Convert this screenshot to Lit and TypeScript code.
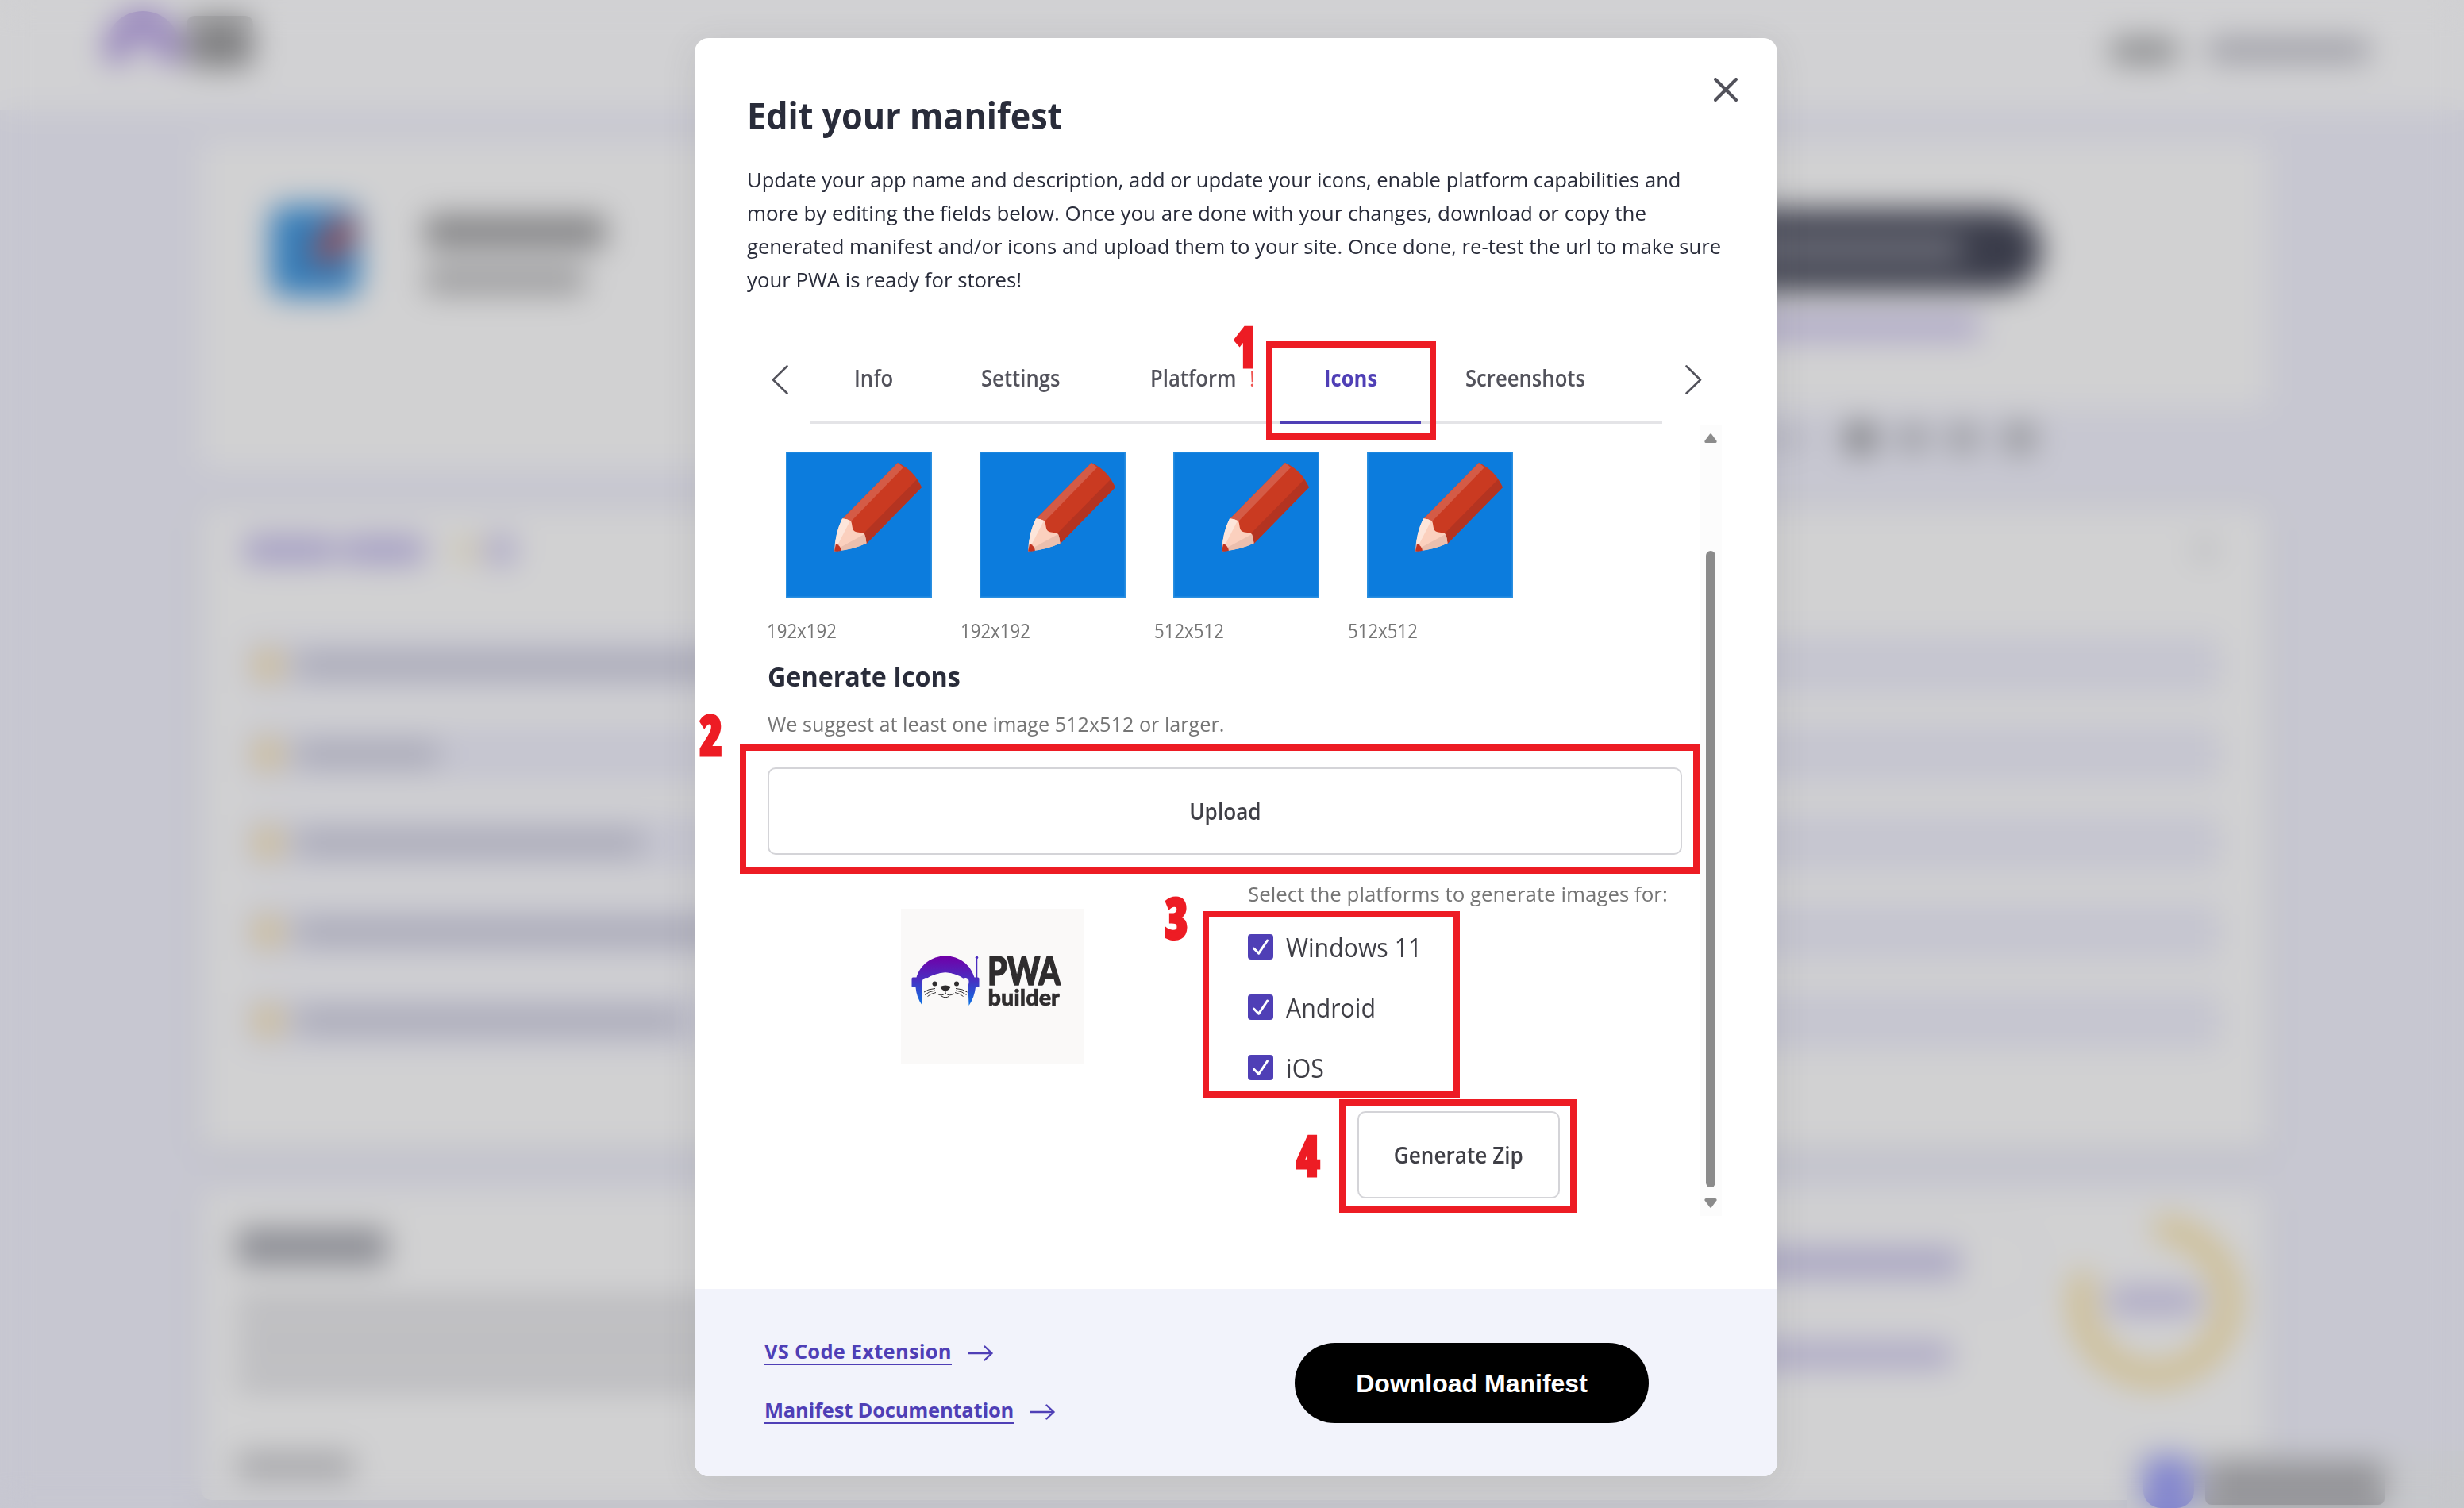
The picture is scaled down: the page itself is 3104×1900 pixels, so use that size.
import { LitElement, html, css, svg } from "lit";
import { customElement, property } from "lit/decorators.js";
import { classMap } from "lit/directives/class-map.js";
import { styleMap } from "lit/directives/style-map.js";

/** Page behind the dialog, softened by the dialog overlay. */
@customElement("report-backdrop")
class ReportBackdrop extends LitElement {
  static styles = css`
    :host { display: block; height: 1900px; overflow: hidden; background: #c7c7d1; }
    * { box-sizing: border-box; }
    .bar { border-radius: 8px; flex: none; }
    .top { height: 139px; background: #d1d1d3; display: flex; justify-content: space-between; padding: 0 119px 0 133px; }
    .brand { display: flex; padding-top: 14px; }
    .arch { width: 94px; height: 64px; border-radius: 47px 47px 0 0; border: 30px solid #8d78b8; border-bottom: 0; }
    .word { width: 84px; height: 66px; margin: 6px 0 0 8px; background: #828284; border-radius: 10px; }
    .nav { display: flex; gap: 38px; padding-top: 48px; }
    .nav .bar { height: 29px; }
    .cards { width: 2604px; margin: 38px 0 0 253px; display: flex; flex-direction: column; gap: 50px; }
    .card { background: #d1d1d2; border-radius: 14px; box-shadow: 0 6px 26px rgba(90, 95, 105, 0.16); }
    .hero { display: grid; grid-template-columns: 1300px 1fr; height: 413px; }
    .hero .card { box-shadow: none; }
    .site { border-radius: 14px 0 0 14px; display: flex; padding: 82px 0 0 88px; gap: 82px; }
    .app { width: 112px; height: 114px; border-radius: 16px; background: #347cb8; flex: none; padding: 12px 4px; display: flex; justify-content: flex-end; align-items: flex-start; }
    .app i { width: 30px; height: 64px; background: #a04a4c; transform: rotate(40deg); border-radius: 8px; margin-right: 12px; }
    .names { padding-top: 12px; display: flex; flex-direction: column; gap: 22px; }
    .action { display: grid; grid-template-rows: 337px 1fr; }
    .act { border-radius: 0 14px 14px 0; padding: 87px 0 0 500px; }
    .pill { width: 519px; height: 102px; border-radius: 51px; background: #3a3c4a; padding: 37px 100px 0 0; display: flex; justify-content: flex-end; }
    .share { display: flex; align-items: center; justify-content: flex-end; gap: 30px; padding-right: 293px; }
    .items { height: 808px; padding: 28px 0 0 54px; }
    .itemhead { display: flex; align-items: center; height: 50px; }
    .grow { flex: 1; }
    .row { height: 72px; width: 2490px; margin-bottom: 40px; background: #c5c5d0; border-radius: 10px; display: flex; align-items: center; gap: 18px; padding-left: 14px; }
    .rows { padding-top: 84px; }
    .dot { width: 34px; height: 34px; border-radius: 50%; background: #d4bb7a; }
    .manifest { height: 392px; padding: 50px 31px 0 45px; display: flex; justify-content: space-between; }
    .copy { display: flex; flex-direction: column; gap: 14px; }
    .side { display: flex; gap: 32px; }
    .links { display: flex; flex-direction: column; align-items: flex-end; gap: 46px; margin-top: -12px; }
    .outline { height: 110px; width: 600px; border: 3px solid #c3c3cd; border-radius: 55px; display: flex; align-items: center; justify-content: flex-end; padding-right: 99px; flex: none; }
    .ring { width: 222px; height: 222px; margin-top: -19px; }
    .badge { position: absolute; right: 0; top: 1828px; width: 424px; height: 72px; background: #c6c7cb; display: flex; gap: 14px; padding: 6px 0 0 20px; }
    .chat { width: 64px; height: 66px; border-radius: 22px; background: #8184ce; }
    .veil { position: absolute; inset: 0; backdrop-filter: blur(19px); }
  `;
  bar(w: number, h: number, c: string, extra = {}) {
    return html`<div class="bar" style=${styleMap({ width: w + "px", height: h + "px", background: c, ...extra })}></div>`;
  }
  render() {
    return html`
      <div class="top">
        <div class="brand"><div class="arch"></div><div class="word"></div></div>
        <div class="nav">${this.bar(84, 32, "#8b8c8e")}${this.bar(204, 30, "#9d9da5")}</div>
      </div>
      <div class="cards">
        <div class="hero">
          <div class="card site">
            <div class="app"><i></i></div>
            <div class="names">${this.bar(228, 42, "#848486")}${this.bar(202, 36, "#9c9c9e")}</div>
          </div>
          <div class="action">
            <div class="card act">
              <div class="pill">${this.bar(380, 26, "#7c7d87")}</div>
              ${this.bar(442, 30, "#aba4c6", { marginTop: "31px" })}
            </div>
            <div class="share">
              ${this.bar(180, 20, "#b0b0bb")}${this.bar(40, 40, "#747577", { borderRadius: "50%", marginLeft: "16px" })}
              ${this.bar(32, 30, "#8c8d91")}${this.bar(34, 34, "#929397")}${this.bar(40, 36, "#929397", { marginLeft: "4px" })}
            </div>
          </div>
        </div>
        <div class="card items">
          <div class="itemhead">
            ${this.bar(116, 34, "#a29bc3")}${this.bar(104, 34, "#a29bc3", { marginLeft: "8px" })}
            ${this.bar(28, 26, "#cabf9f", { marginLeft: "38px" })}${this.bar(36, 36, "#a9a4c6", { marginLeft: "12px" })}
            <div class="grow"></div>${this.bar(26, 22, "#b3b4b9", { marginRight: "66px" })}
          </div>
          <div class="rows">
            ${[560, 180, 438, 540, 486].map((w) => html`<div class="row"><div class="dot"></div>${this.bar(w, 26, "#a4a4b2")}</div>`)}
          </div>
        </div>
        <div class="card manifest">
          <div class="copy">
            ${this.bar(190, 46, "#8b8c93")}
            ${this.bar(740, 26, "#b4b4b8", { marginTop: "28px" })}${this.bar(740, 26, "#b3b3b7", { marginTop: "4px" })}${this.bar(740, 26, "#b4b4b8", { marginTop: "4px" })}
            ${this.bar(148, 30, "#a1a1a5", { marginTop: "68px" })}
          </div>
          <div class="side">
            <div class="links">
              <div class="outline">${this.bar(340, 36, "#a7a3c2")}</div>
              ${this.bar(340, 30, "#a9a4c4", { marginRight: "113px" })}
            </div>
            <svg class="ring" viewBox="0 0 222 222">
              <path d="M111 18A93 93 0 1 1 24 76" fill="none" stroke="#cebb89" stroke-width="28" />
              <rect x="52" y="94" width="116" height="32" rx="10" fill="#aaa5c4" />
            </svg>
          </div>
        </div>
      </div>
      <div class="badge"><div class="chat"></div>${this.bar(226, 56, "#949498", { marginTop: "6px" })}</div>
      <div class="veil"></div>
    `;
  }
}

/** Red pencil on a blue tile. */
const pencil = svg`
  <rect width="184" height="184" fill="#0c7cdd"/>
  <rect x=".75" y=".75" width="182.500" height="182.500" fill="none" stroke="#2a8fe0" stroke-width="1.500"/>
  <path d="M141 14Q162 24 171 45L101.500 116L80 108L71 85Z" fill="#ca3a21"/>
  <path d="M141 14L148 20L82 88L71 85Z" fill="#d45b46"/>
  <path d="M165 35L171 45L101.500 116L98 103Z" fill="#b43421"/>
  <path d="M71 84.500Q76 84 82 87.500C84 92 83 97 86 100C91 103 96 101 99 104Q101 109 101.500 115.500Q84 124 61 125.500Q62 103 71 84.500Z" fill="#fbd0be"/>
  <path d="M71 84.500Q76 84 81 87L64 120L62 121Q62 102 71 84.500Z" fill="#fde5da"/>
  <path d="M99 104Q101 109 101.500 115.500Q86 123 66 125.200L68 121Z" fill="#ebbfae"/>
  <path d="M63 116Q68.500 118 70 124.700Q66 126 61 125.500Z" fill="#c23522"/>`;

const builderLogo = svg`
  <defs><linearGradient id="helmet" x1="0" y1="60" x2="0" y2="122" gradientUnits="userSpaceOnUse">
    <stop offset="0" stop-color="#7000a8"/><stop offset=".45" stop-color="#4b2cc0"/><stop offset="1" stop-color="#0a74e4"/>
  </linearGradient></defs>
  <path d="M19.500 86.500C24 71 38 59.500 56 59.500S88 71 92.500 86.500H97Q98.500 86.500 98.500 88V97.500Q98.500 99 97 99H94Q92.500 112 85.500 122L84.500 96L79 88Q68 80.500 56 80.500T32 88L27 96V122Q19.500 112 18.500 99H15Q13.500 99 13.500 97.500V88Q13.500 86.500 15 86.500Z" fill="url(#helmet)"/>
  <path d="M95.500 87V63" stroke="#4b2cc0" stroke-width="1.500"/><circle cx="95.500" cy="61.500" r="1.800" fill="#4b2cc0"/>
  <path d="M27 122V96Q25.500 88 31 87Q34 86.500 36 89Q45 80.500 56 80.500T77 89Q79 86.500 82 87Q87 88 85 96V122Z" fill="#faf9f8"/>
  <circle cx="42.500" cy="94.500" r="3" fill="#2f2d2e"/><circle cx="70" cy="94.500" r="3" fill="#2f2d2e"/>
  <path d="M49.500 98Q56 95 62.500 98Q62 101 57.500 103.500Q56 104.500 54.500 103.500Q50 101 49.500 98Z" fill="#2f2d2e"/>
  <path d="M56 103V107M56 106.500Q51 111 45.500 107M56 106.500Q61 111 66.500 107M51 110Q56 113.500 61 110M43 100.500Q34 101 29 105M43 103Q35 104 30 108.500M44 105.500Q37 107 33.500 110.500M69 100.500Q78 101 83.500 105M69 103Q77 104 82.500 108.500M68 105.500Q75 107 78.500 110.500" fill="none" stroke="#2f2d2e" stroke-width="1"/>
  <text x="109" y="96" class="pwa" textLength="92" lengthAdjust="spacingAndGlyphs">PWA</text>
  <text x="109.500" y="122" class="bld" textLength="90.500" lengthAdjust="spacingAndGlyphs">builder</text>`;

const checkmark = html`<svg class="box" viewBox="0 0 32 32"><rect width="32" height="32" rx="4" fill="#4f3fb6"/><path d="M7.500 18L13.700 24.200L24.500 8" fill="none" stroke="#fff" stroke-width="3" stroke-linecap="round" stroke-linejoin="round"/></svg>`;
const arrow = html`<svg class="arrow" viewBox="0 0 32 20"><path d="M1.200 10H30.500M21.500 1.500L30.500 10L21.500 18.500" fill="none" stroke="#4f3fb6" stroke-width="2.400" stroke-linecap="round" stroke-linejoin="round"/></svg>`;

@customElement("manifest-dialog")
class ManifestDialog extends LitElement {
  static styles = css`
    :host { display: flex; flex-direction: column; width: 1364px; height: 1812px; background: #fff; border-radius: 18px; overflow: hidden; font-family: "Open Sans", "Noto Sans", sans-serif; color: #292c3a; }
    * { box-sizing: border-box; }
    h1, h2, p { margin: 0; }
    .fit { display: inline-block; white-space: nowrap; transform-origin: 0 50%; transform: scaleX(var(--sx, 1)); }
    .head { display: grid; grid-template-columns: 1fr auto; padding: 67px 50px 0 66px; }
    .title { font-size: 46px; line-height: 60px; font-weight: 700; --sx: 0.938; }
    .close { width: 30px; height: 30px; margin-top: -17px; display: block; }
    .lead { padding: 30px 65px 0 66px; font-size: 25.500px; line-height: 42px; display: flex; flex-direction: column; align-items: flex-start; }
    .l1 { --sx: 1.003; } .l2 { --sx: 1.017; } .l3 { --sx: 1.006; } .l4 { --sx: 1.010; }
    .tabs { height: 161px; padding: 47px 94px 0 97px; display: grid; grid-template-columns: 48px 1074px 21px; column-gap: 0; justify-content: start; }
    .tabs .next { margin-left: 29px; }
    .chev { width: 21px; height: 37px; margin-top: 40px; }
    .list { display: grid; grid-template-columns: 160px 213px 219px 178px 1fr; border-bottom: 4px solid #e4e4e7; }
    .tab { display: flex; padding: 36px 0 0 55.500px; font-size: 28px; line-height: 40px; font-weight: 600; color: #52525b; margin-bottom: -4px; gap: 7px; --sx: 0.917; }
    .tab.on { color: #4f3fb6; font-weight: 700; border-bottom: 4px solid #4f3fb6; }
    .warn { color: #ef5350; font-weight: 400; --sx: 1; }
    .pane { height: 996px; margin: 2px 70px 0 91px; display: flex; justify-content: space-between; }
    .content { width: 1153px; }
    .icons { display: grid; grid-template-columns: repeat(4, 244.100px); padding-top: 33px; }
    .tile { display: block; width: 184px; height: 184px; margin: 0 0 23px 24px; }
    .size { font-size: 25.200px; line-height: 36px; height: 36px; color: #757575; --sx: 0.882; }
    .sub { font-size: 34px; line-height: 46px; margin-top: 17px; font-weight: 700; height: 46px; --sx: 0.949; padding-left: 1px; }
    .hint { font-size: 25.200px; line-height: 36px; height: 36px; margin-top: 19px; color: #757575; --sx: 1.001; padding-left: 1px; }
    .btn { display: flex; align-items: center; justify-content: center; height: 110px; border: 2px solid #d4d4d8; border-radius: 10px; background: #fff; font-size: 28px; line-height: 40px; font-weight: 600; color: #3f3f46; --sx: 0.934; }
    .btn .fit { transform-origin: 50% 50%; }
    .upload { margin: 37px 0 0 1px; }
    .gen { display: flex; justify-content: space-between; padding: 31px 17px 0 169px; }
    .preview { width: 230px; height: 196px; margin-top: 37px; background: #faf9f8; display: block; }
    .pwa { font: 900 50px Lato, sans-serif; fill: #2f2d2e; stroke: #2f2d2e; stroke-width: 1.500px; }
    .bld { font: 900 28.500px Lato, sans-serif; fill: #2f2d2e; stroke: #2f2d2e; stroke-width: 0.500px; }
    .platforms { width: 530px; display: flex; flex-direction: column; align-items: center; }
    .ask { width: 100%; font-size: 26px; line-height: 36px; color: #757575; margin-bottom: 33px; --sx: 0.996; }
    .check { width: 100%; height: 32px; display: flex; gap: 16px; font-size: 32px; line-height: 33px; color: #3f3f46; margin-bottom: 44px; --sx: 0.946; }
    .box { width: 32px; height: 32px; flex: none; }
    .zip { width: 255px; margin-top: -5px; }
    .scroll { width: 28px; background: #fcfcfc; display: flex; flex-direction: column; align-items: center; padding: 10px 0; }
    .tri { width: 16px; height: 12px; display: block; }
    .thumb { width: 12px; height: 802px; margin: 136px 0 14px; border-radius: 6px; background: #8b8b8b; }
    .foot { margin-top: auto; height: 236px; background: #f2f3fb; display: flex; justify-content: space-between; align-items: flex-start; padding: 59px 162px 0 88px; }
    .links { display: flex; flex-direction: column; gap: 37px; }
    .link { display: flex; align-items: center; gap: 20px; color: #4f3fb6; font-size: 25.500px; line-height: 31px; font-weight: 700; height: 37px; }
    .link span { padding-top: 4px; border-bottom: 2px solid #4f3fb6; white-space: nowrap; letter-spacing: 0.220px; }
    .link.doc span { letter-spacing: -0.200px; }
    .arrow { width: 32px; height: 20px; margin-top: 7px; }
    .download { width: 446px; height: 101px; margin-top: 9px; border: 0; border-radius: 51px; background: #000; color: #fff; font: 700 32px/1 "Liberation Sans", Arial, sans-serif; display: flex; align-items: center; justify-content: center; }
  `;
  tabs = ["Info", "Settings", "Platform", "Icons", "Screenshots"];
  sizes = ["192x192", "192x192", "512x512", "512x512"];
  @property() active = "Icons";
  render() {
    return html`
      <div class="head">
        <h1 class="title"><span class="fit">Edit your manifest</span></h1>
        <svg class="close" viewBox="0 0 30 30"><path d="M2 2L28 28M28 2L2 28" stroke="#52525b" stroke-width="4" stroke-linecap="round"/></svg>
      </div>
      <p class="lead">
        <span class="fit l1">Update your app name and description, add or update your icons, enable platform capabilities and</span>
        <span class="fit l2">more by editing the fields below. Once you are done with your changes, download or copy the</span>
        <span class="fit l3">generated manifest and/or icons and upload them to your site. Once done, re-test the url to make sure</span>
        <span class="fit l4">your PWA is ready for stores!</span>
      </p>
      <div class="tabs">
        <svg class="chev" viewBox="0 0 21 37"><path d="M19.500 1.500L2 18.500L19.500 35.500" fill="none" stroke="#52525b" stroke-width="2.600" stroke-linecap="round" stroke-linejoin="round"/></svg>
        <div class="list">
          ${this.tabs.map((t) => html`<div class=${classMap({ tab: true, on: t === this.active })}><span class="fit">${t}</span>${t === "Platform" ? html`<span class="fit warn">!</span>` : ""}</div>`)}
        </div>
        <svg class="chev next" viewBox="0 0 21 37"><path d="M1.500 1.500L19 18.500L1.500 35.500" fill="none" stroke="#52525b" stroke-width="2.600" stroke-linecap="round" stroke-linejoin="round"/></svg>
      </div>
      <div class="pane">
        <div class="content">
          <div class="icons">
            ${this.sizes.map((s) => html`<div><svg class="tile" viewBox="0 0 184 184">${pencil}</svg><div class="size"><span class="fit">${s}</span></div></div>`)}
          </div>
          <h2 class="sub"><span class="fit">Generate Icons</span></h2>
          <p class="hint"><span class="fit">We suggest at least one image 512x512 or larger.</span></p>
          <div class="btn upload"><span class="fit">Upload</span></div>
          <div class="gen">
            <svg class="preview" viewBox="0 0 230 196">${builderLogo}</svg>
            <div class="platforms">
              <div class="ask"><span class="fit">Select the platforms to generate images for:</span></div>
              ${["Windows 11", "Android", "iOS"].map((p) => html`<div class="check">${checkmark}<span class="fit">${p}</span></div>`)}
              <div class="btn zip"><span class="fit">Generate Zip</span></div>
            </div>
          </div>
        </div>
        <div class="scroll">
          <svg class="tri" viewBox="0 0 16 12"><path d="M7 .8Q8 -.4 9 .8L15.500 9.600Q16 12 14 12H2Q0 12 .5 9.600Z" fill="#8b8b8b"/></svg>
          <div class="thumb"></div>
          <svg class="tri" viewBox="0 0 16 12"><path d="M7 11.200Q8 12.400 9 11.200L15.500 2.400Q16 0 14 0H2Q0 0 .5 2.400Z" fill="#8b8b8b"/></svg>
        </div>
      </div>
      <div class="foot">
        <div class="links">
          <div class="link"><span>VS Code Extension</span>${arrow}</div>
          <div class="link doc"><span>Manifest Documentation</span>${arrow}</div>
        </div>
        <div class="download">Download Manifest</div>
      </div>
    `;
  }
}

@customElement("app-root")
class AppRoot extends LitElement {
  static styles = css`
    :host { display: block; position: relative; width: 3104px; height: 1900px; overflow: hidden; }
    .stage { position: absolute; inset: 0; display: flex; justify-content: center; align-items: flex-start; padding: 48px 0 0 10px; }
    manifest-dialog { box-shadow: 0 8px 44px rgba(70, 70, 80, 0.12); }
    .mark { position: absolute; border: 8px solid #ed1c24; box-sizing: border-box; }
    .m1 { left: 1595px; top: 430px; width: 214px; height: 124px; }
    .m2 { left: 932px; top: 938px; width: 1209px; height: 163px; }
    .m3 { left: 1515px; top: 1148px; width: 324px; height: 235px; }
    .m4 { left: 1687px; top: 1385px; width: 299px; height: 143px; }
    .num { position: absolute; width: 40px; text-align: center; font: 800 71px/60px "Open Sans", sans-serif; font-stretch: 75%; color: #ed1c24; transform: scaleX(0.840); -webkit-text-stroke: 3px #ed1c24; }
    .n1 { left: 1548px; top: 406px; }
    .n2 { left: 876px; top: 895px; }
    .n3 { left: 1462px; top: 1126px; }
    .n4 { left: 1628px; top: 1425px; }
  `;
  render() {
    return html`
      <report-backdrop></report-backdrop>
      <div class="stage"><manifest-dialog></manifest-dialog></div>
      ${[1, 2, 3, 4].map((n) => html`<div class="mark m${n}"></div><div class="num n${n}">${n}</div>`)}
    `;
  }
}
